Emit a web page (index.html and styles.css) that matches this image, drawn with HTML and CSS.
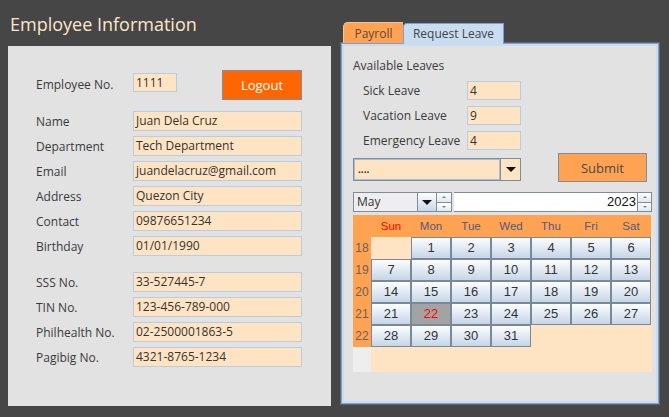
FILE: index.html
```html
<!DOCTYPE html>
<html>
<head>
<meta charset="utf-8">
<title>Employee Information</title>
<link rel="stylesheet" href="styles.css">
</head>
<body>
<div class="app">
  <section class="left">
    <h1 class="title">Employee Information</h1>
    <div class="card">
      <div class="emp-row">
        <span class="label">Employee No.</span>
        <div class="field small">1111</div>
        <button class="logout">Logout</button>
      </div>
      <div class="grid">
        <span class="label">Name</span><div class="field">Juan Dela Cruz</div>
        <span class="label">Department</span><div class="field">Tech Department</div>
        <span class="label">Email</span><div class="field">juandelacruz@gmail.com</div>
        <span class="label">Address</span><div class="field">Quezon City</div>
        <span class="label">Contact</span><div class="field">09876651234</div>
        <span class="label">Birthday</span><div class="field">01/01/1990</div>
      </div>
      <div class="grid ids">
        <span class="label">SSS No.</span><div class="field">33-527445-7</div>
        <span class="label">TIN No.</span><div class="field">123-456-789-000</div>
        <span class="label">Philhealth No.</span><div class="field">02-2500001863-5</div>
        <span class="label">Pagibig No.</span><div class="field">4321-8765-1234</div>
      </div>
    </div>
  </section>

  <section class="right">
    <div class="tabs">
      <div class="tab payroll">Payroll</div>
      <div class="tab active">Request Leave</div>
    </div>
    <div class="panel">
      <div class="heading">Available Leaves</div>
      <div class="leaves">
        <span class="label">Sick Leave</span><div class="field">4</div>
        <span class="label">Vacation Leave</span><div class="field">9</div>
        <span class="label">Emergency Leave</span><div class="field">4</div>
      </div>
      <div class="actions">
        <div class="combo">
          <div class="combo-text">....</div>
          <div class="combo-btn"><span class="tri"></span></div>
        </div>
        <button class="submit">Submit</button>
      </div>
      <div class="chooser">
        <div class="month">May</div>
        <div class="month-btn"><span class="tri"></span></div>
        <div class="spin"><span class="up"></span><span class="down"></span></div>
        <div class="year">2023</div>
        <div class="spin"><span class="up"></span><span class="down"></span></div>
      </div>
      <div class="calendar">
        <div class="hd"></div>
        <div class="hd sun">Sun</div><div class="hd">Mon</div><div class="hd">Tue</div><div class="hd">Wed</div><div class="hd">Thu</div><div class="hd">Fri</div><div class="hd">Sat</div>

        <div class="wk">18</div>
        <div class="empty"></div><div class="day">1</div><div class="day">2</div><div class="day">3</div><div class="day">4</div><div class="day">5</div><div class="day">6</div>

        <div class="wk">19</div>
        <div class="day">7</div><div class="day">8</div><div class="day">9</div><div class="day">10</div><div class="day">11</div><div class="day">12</div><div class="day">13</div>

        <div class="wk">20</div>
        <div class="day">14</div><div class="day">15</div><div class="day">16</div><div class="day">17</div><div class="day">18</div><div class="day">19</div><div class="day">20</div>

        <div class="wk">21</div>
        <div class="day">21</div><div class="day sel">22</div><div class="day">23</div><div class="day">24</div><div class="day">25</div><div class="day">26</div><div class="day">27</div>

        <div class="wk">22</div>
        <div class="day">28</div><div class="day">29</div><div class="day">30</div><div class="day">31</div><div class="empty"></div><div class="empty"></div><div class="empty"></div>

        <div class="wk blank"></div>
        <div class="empty"></div><div class="empty"></div><div class="empty"></div><div class="empty"></div><div class="empty"></div><div class="empty"></div><div class="empty"></div>
      </div>
    </div>
  </section>
</div>
</body>
</html>
```

FILE: styles.css
```css
html, body {
  margin: 0;
  padding: 0;
}
body {
  background: #464646;
  font-family: "Open Sans", "Noto Sans", sans-serif;
  font-size: 12px;
  color: #333;
  width: 669px;
  height: 417px;
  overflow: hidden;
}
.app {
  display: flex;
  padding-left: 8px;
  gap: 10px;
}
.left {
  width: 323px;
}
.title {
  margin: 0;
  height: 46px;
  box-sizing: border-box;
  padding: 12px 0 0 2px;
  font-size: 18px;
  line-height: 24px;
  font-weight: normal;
  color: #ffe6c9;
}
.card {
  height: 360px;
  box-sizing: border-box;
  background: #e2e2e2;
  padding: 24px 0 0 28px;
}
.label {
  color: #3a3a3a;
  white-space: nowrap;
}
.emp-row {
  display: flex;
  align-items: flex-start;
  height: 30px;
}
.emp-row .label {
  width: 97px;
  line-height: 19px;
  margin-top: 5px;
}
.field {
  box-sizing: border-box;
  height: 20px;
  line-height: 18px;
  border: 1px solid #b6cde5;
  background: #ffe4c4;
  padding-left: 2px;
  color: #333;
  white-space: nowrap;
  overflow: hidden;
}
.field.small {
  width: 44px;
  height: 19px;
  line-height: 17px;
  margin-top: 3px;
}
.logout {
  margin-left: 45px;
  width: 80px;
  height: 30px;
  background: #ff6600;
  border: 1px solid #7c8da0;
  color: #fff;
  font-family: inherit;
  font-size: 13px;
  padding: 0;
}
.grid {
  display: grid;
  grid-template-columns: 97px 169px;
  grid-auto-rows: 20px;
  row-gap: 5px;
  margin-top: 11px;
}
.grid .label {
  line-height: 20px;
  padding-top: 1px;
}
.grid.ids {
  margin-top: 16px;
}

/* right side */
.right {
  width: 318px;
  padding-top: 22px;
}
.tabs {
  display: flex;
  align-items: flex-end;
  height: 21px;
  padding-left: 2px;
}
.tab {
  box-sizing: border-box;
  line-height: 19px;
  text-align: center;
  font-size: 12px;
}
.tab.payroll {
  width: 60px;
  height: 21px;
  background: #ffa352;
  color: #5d4a38;
  border-top: 1px solid #f0c8a0;
  border-left: 1px solid #f0c8a0;
  border-radius: 5px 0 0 0;
  padding-top: 1px;
}
.tab.active {
  width: 101px;
  height: 21px;
  background: #c9ddf1;
  color: #444;
  border: 1px solid #7f9fd0;
  border-bottom: none;
  border-radius: 4px 0 0 0;
  margin-bottom: -1px;
  position: relative;
  z-index: 1;
}
.panel {
  box-sizing: border-box;
  height: 361px;
  background: #e2e2e2;
  border: 1px solid #7f9fd0;
  box-shadow: inset 0 0 0 2px #c9ddf1, 0 0 0 1px #5e6670;
  padding: 13px 0 0 11px;
}
.heading {
  line-height: 18px;
  color: #3a3a3a;
}
.leaves {
  display: grid;
  grid-template-columns: 104px 54px;
  grid-auto-rows: 19px;
  row-gap: 6px;
  margin-top: 6px;
  padding-left: 10px;
}
.leaves .label {
  line-height: 19px;
}
.leaves .field {
  height: 19px;
  line-height: 17px;
}
.actions {
  display: flex;
  align-items: flex-start;
  margin-top: 3px;
}
.combo {
  display: flex;
  box-sizing: border-box;
  width: 168px;
  height: 23px;
  margin-top: 5px;
  border: 1px solid #7c8da0;
  background: #ffe4c4;
}
.combo-text {
  flex: 1;
  border: 1px solid #a9bfd6;
  line-height: 19px;
  padding-left: 3px;
  font-weight: bold;
  font-size: 10px;
  color: #333;
}
.combo-btn {
  width: 19px;
  border-left: 1px solid #7c8da0;
  display: flex;
  align-items: center;
  justify-content: center;
}
.tri {
  width: 0;
  height: 0;
  border-left: 5px solid transparent;
  border-right: 5px solid transparent;
  border-top: 5px solid #111;
}
.submit {
  margin-left: 37px;
  width: 89px;
  height: 29px;
  background: #ffa352;
  border: 1px solid #7c8da0;
  color: #4a4a4a;
  font-family: inherit;
  font-size: 13px;
  padding: 0;
}
.chooser {
  display: flex;
  height: 20px;
  margin-top: 10px;
}
.month {
  box-sizing: border-box;
  width: 64px;
  background: #eeeeee;
  border: 1px solid #7c8da0;
  border-right: none;
  line-height: 18px;
  padding-left: 3px;
  color: #333;
}
.month-btn {
  box-sizing: border-box;
  width: 20px;
  border: 1px solid #7c8da0;
  background: linear-gradient(#ffffff, #c6d6e8);
  display: flex;
  align-items: center;
  justify-content: center;
}
.spin {
  box-sizing: border-box;
  width: 15px;
  display: flex;
  flex-direction: column;
  border: 1px solid #7c8da0;
  border-left: none;
}
.spin span {
  flex: 1;
  background: linear-gradient(#ffffff, #e0e8f0);
  position: relative;
}
.spin .up {
  border-bottom: 1px solid #7c8da0;
}
.spin .up::after,
.spin .down::after {
  content: "";
  position: absolute;
  left: 5px;
  top: 3px;
  border-left: 2px solid transparent;
  border-right: 2px solid transparent;
}
.spin .up::after {
  border-bottom: 2px solid #808080;
}
.spin .down::after {
  border-top: 2px solid #808080;
}
.year {
  box-sizing: border-box;
  width: 183px;
  margin-left: 2px;
  background: #fff;
  border-top: 1px solid #7c8da0;
  border-bottom: 1px solid #7c8da0;
  text-align: right;
  line-height: 18px;
  font-family: "Liberation Sans", Arial, sans-serif;
  font-size: 13px;
  color: #111;
  padding-right: 1px;
}
.year + .spin {
  border-left: 1px solid #7c8da0;
}
.calendar {
  display: grid;
  grid-template-columns: 18px repeat(7, 40px);
  grid-template-rows: repeat(6, 22px) 25px;
  width: 299px;
  margin-top: 3px;
  background: #ffe4c4;
  font-family: "Liberation Sans", Arial, sans-serif;
  font-size: 13px;
}
.hd {
  background: #ffa352;
  color: #505a80;
  text-align: center;
  line-height: 22px;
  font-size: 11.5px;
}
.hd.sun {
  color: #ff0000;
}
.wk {
  background: #ffa352;
  color: #6e6258;
  text-align: center;
  line-height: 22px;
  font-size: 12px;
}
.wk.blank {
  background: #eeeeee;
}
.day {
  box-sizing: border-box;
  border: 1px solid #7a8898;
  background: linear-gradient(#fdfeff, #c5d5e7);
  text-align: center;
  line-height: 20px;
  color: #333;
}
.day.sel {
  background: #a3a3a3;
  color: #ff0000;
}
```
